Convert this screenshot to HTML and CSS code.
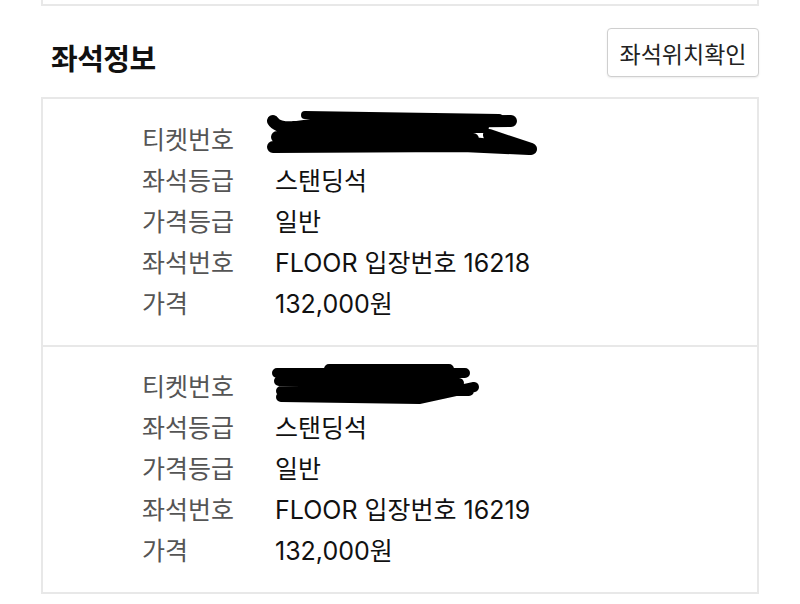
FILE: index.html
```html
<!DOCTYPE html>
<html lang="ko">
<head>
    <meta charset="UTF-8">
    <meta name="viewport" content="width=device-width, initial-scale=1.0">
    <title>좌석정보</title>
    <link rel="stylesheet" href="styles.css">
</head>
<body>
    <div class="container">
        <div class="prev-card"></div>

        <!-- Section header -->
        <div class="section-head">
            <h2 class="section-title">좌석정보</h2>
            <button class="seat-btn">좌석위치확인</button>
        </div>

        <!-- Seat list -->
        <div class="seat-list">
            <div class="seat">
                <div class="label">티켓번호</div>
                <div class="value redacted">
                    <svg class="scribble one" width="290" height="52" viewBox="0 0 290 52">
                        <path d="M 10 12 C 16 22, 40 18, 60 14 L 248 12 M 30 18 L 220 18 M 10 38 L 200 37 L 266 40 M 200 33 L 266 40 M 226 26 L 268 40 M 14 28 L 210 30 M 40 24 L 200 24" stroke="#000" stroke-width="12" stroke-linecap="round" stroke-linejoin="round" fill="none"/>
                        <path d="M 42 6 L 236 9" stroke="#000" stroke-width="8" stroke-linecap="round" fill="none"/>
                    </svg>
                </div>
                <div class="label">좌석등급</div>
                <div class="value">스탠딩석</div>
                <div class="label">가격등급</div>
                <div class="value">일반</div>
                <div class="label">좌석번호</div>
                <div class="value">FLOOR 입장번호 16218</div>
                <div class="label">가격</div>
                <div class="value">132,000원</div>
            </div>
            <div class="seat">
                <div class="label">티켓번호</div>
                <div class="value redacted">
                    <svg class="scribble two" width="230" height="44" viewBox="0 0 230 44">
                        <path d="M 8 10 L 196 10 M 60 6 L 180 6 M 10 18 L 190 20 M 12 28 L 200 28 M 12 34 L 150 36 L 205 24 M 20 24 L 160 24" stroke="#000" stroke-width="10" stroke-linecap="round" stroke-linejoin="round" fill="none"/>
                    </svg>
                </div>
                <div class="label">좌석등급</div>
                <div class="value">스탠딩석</div>
                <div class="label">가격등급</div>
                <div class="value">일반</div>
                <div class="label">좌석번호</div>
                <div class="value">FLOOR 입장번호 16219</div>
                <div class="label">가격</div>
                <div class="value">132,000원</div>
            </div>
        </div>
    </div>
</body>
</html>
```

FILE: styles.css
```css
body {
    margin: 0;
    padding: 0;
    background: #fff;
    font-family: Inter, "Noto Sans CJK KR", "Noto Sans", sans-serif;
    color: #111;
}
.container {
    padding: 0 41px;
}
.prev-card {
    height: 4px;
    border: 2px solid #e8e8e8;
    border-top: none;
}
.section-head {
    display: flex;
    justify-content: space-between;
    align-items: flex-end;
    padding: 22px 0 0 10px;
    margin-bottom: 20px;
}
.section-title {
    margin: 0;
    font-size: 29px;
    font-weight: bold;
    line-height: 34px;
    letter-spacing: -0.5px;
}
.seat-btn {
    height: 49px;
    width: 152px;
    padding: 0;
    background: #fff;
    border: 1px solid #cfcfcf;
    border-radius: 4px;
    box-shadow: 0 1px 2px rgba(0, 0, 0, 0.08);
    font-family: inherit;
    font-size: 23px;
    color: #222;
    cursor: pointer;
}
.seat-list {
    border: 2px solid #e8e8e8;
}
.seat {
    display: grid;
    grid-template-columns: 133px 1fr;
    grid-auto-rows: 41px;
    align-items: center;
    padding: 18px 0 23px 99px;
}
.seat + .seat {
    border-top: 2px solid #e8e8e8;
    padding-top: 17px;
}
.label {
    font-size: 25px;
    color: #555;
}
.value {
    font-size: 25px;
    color: #111;
}
.redacted {
    position: relative;
    height: 41px;
}
.scribble {
    position: absolute;
    overflow: visible;
}
.scribble.one {
    left: -12px;
    top: -8px;
}
.scribble.two {
    left: -6px;
    top: -1px;
}
```
